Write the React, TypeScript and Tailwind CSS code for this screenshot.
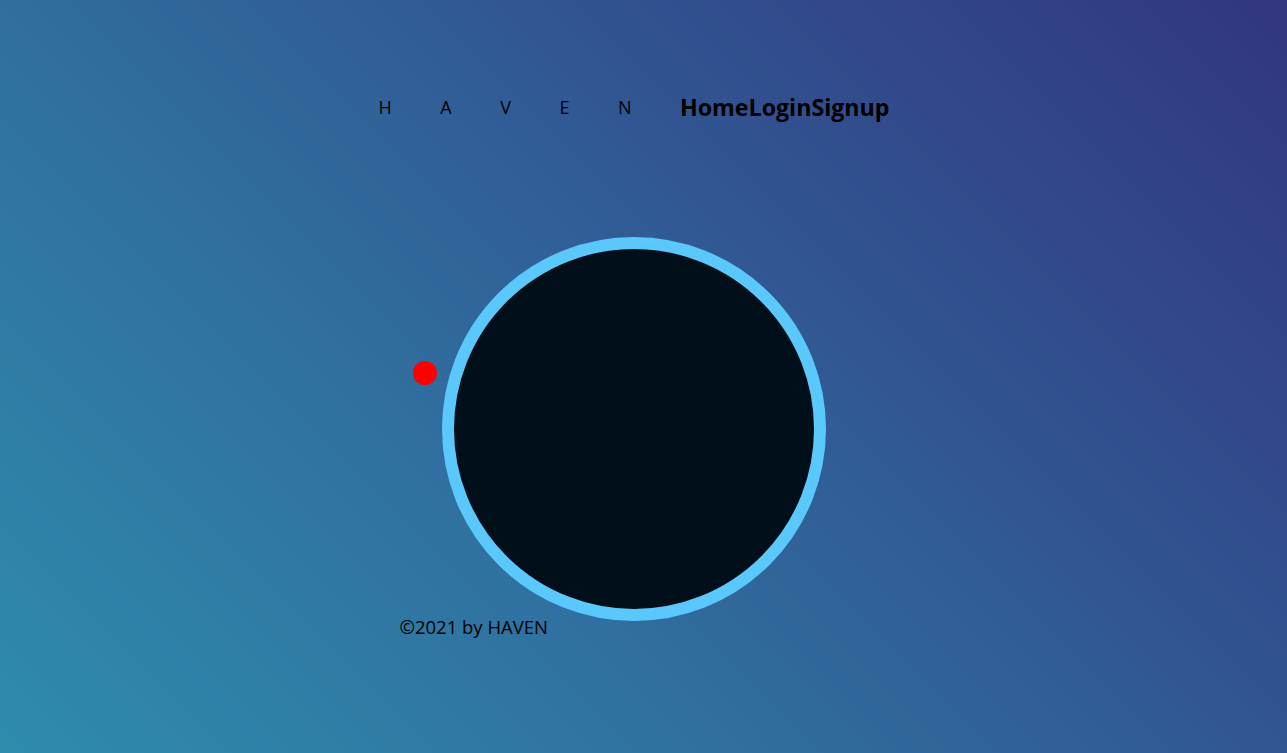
import React from 'react';

const navLinks = ['Home', 'Login', 'Signup'];

const App: React.FC = () => {
  return (
    <div
      className="min-h-screen w-full overflow-hidden bg-[linear-gradient(45deg,#2e8cad_0%,#3070a0_35%,#314f8e_70%,#32367f_100%)] text-black"
      style={{ fontFamily: '"Open Sans", "Noto Sans", sans-serif' }}
    >
      <div className="mx-auto flex w-[510px] -translate-x-[10px] flex-col">
        {/* ヘッダー */}
        <header className="flex items-center pt-[93px]">
          <span className="text-[18px] leading-[28px] tracking-[48.5px]">HAVEN</span>
          <nav className="flex text-[23.2px] font-bold leading-[28px]">
            {navLinks.map((link) => (
              <a key={link} href="#" className="cursor-pointer">
                {link}
              </a>
            ))}
          </nav>
        </header>

        {/* メインの円 */}
        <main className="mt-[116px] flex justify-center">
          <div className="relative">
            <div className="h-[384px] w-[384px] rounded-full border-[12px] border-[#5bc8fb] bg-[#000f1a]" />
            <span className="absolute left-[-29px] top-[124px] h-[24px] w-[24px] rounded-full bg-[#ff0000]" />
          </div>
        </main>

        {/* フッター */}
        <footer className="-mt-[6px] pl-[21px] text-[18.5px] leading-[24px]">©2021 by HAVEN</footer>
      </div>
    </div>
  );
};

export default App;
